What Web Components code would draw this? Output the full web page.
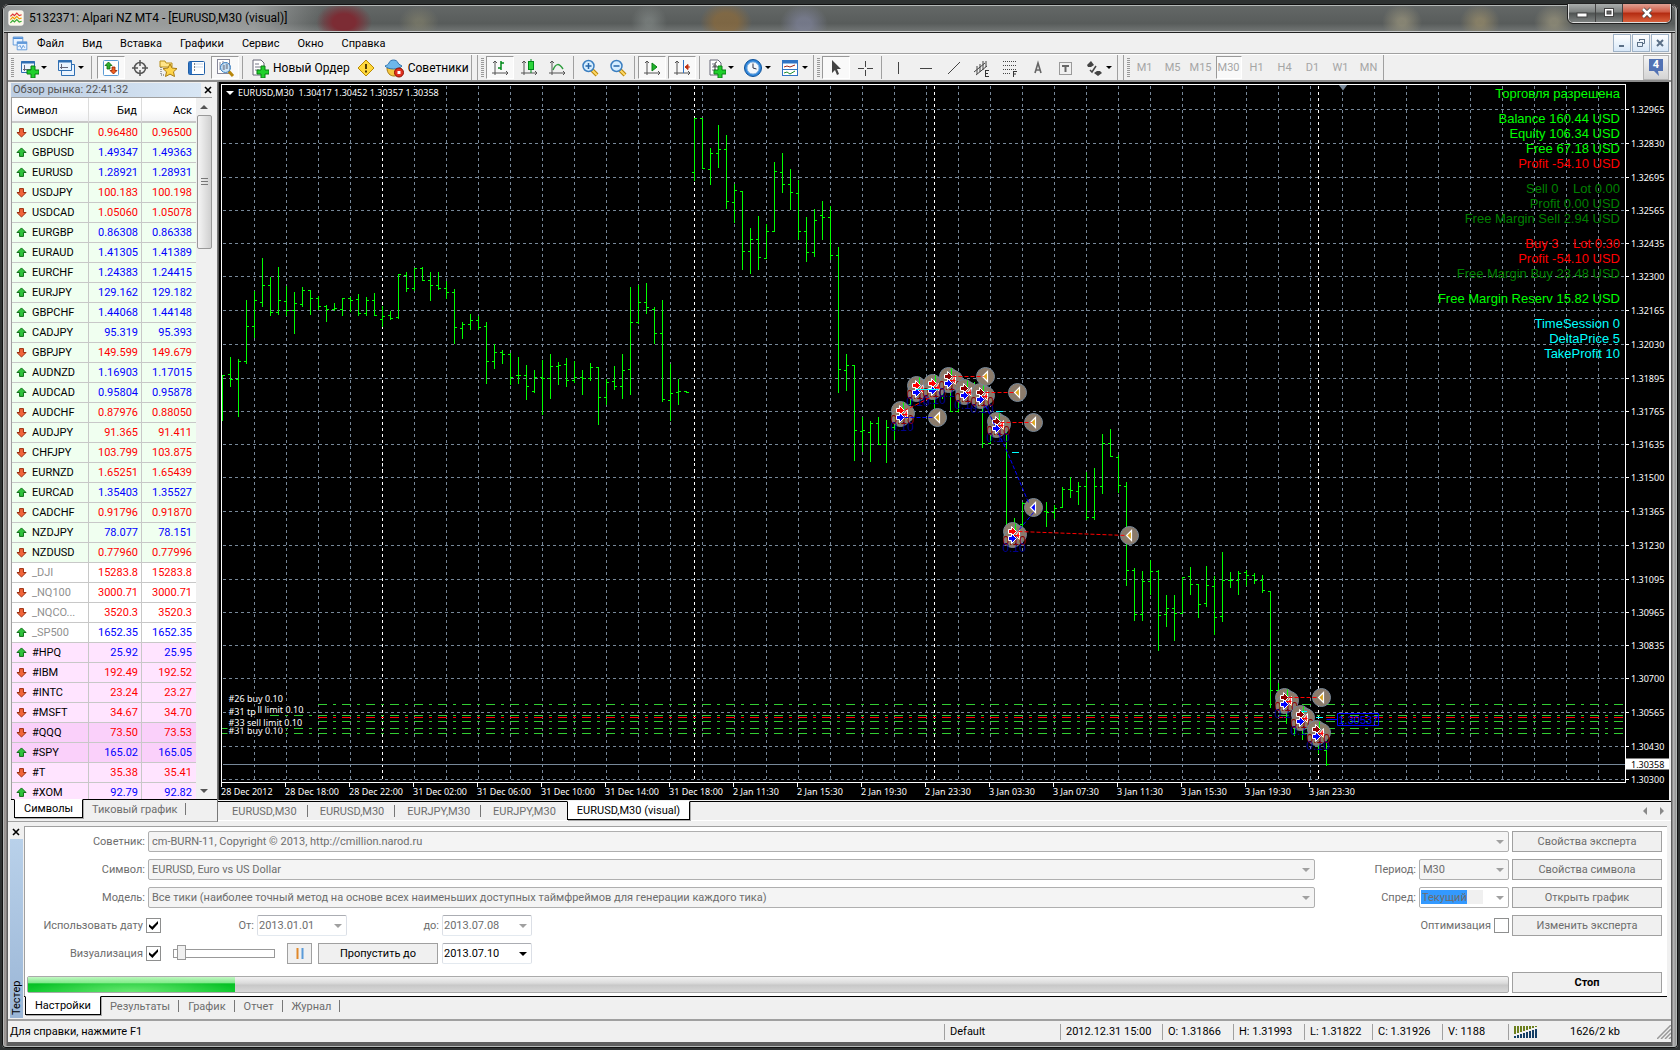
<!DOCTYPE html>
<html lang="ru">
<head>
<meta charset="utf-8">
<title>5132371: Alpari NZ MT4 - [EURUSD,M30 (visual)]</title>
<style>
:root {
  --face: #f0f0f0;
  --line: #a0a0a0;
  --muted: #6d6d6d;
  --ui: Roboto, "Noto Sans", sans-serif;
  --chart: "Noto Sans", "Open Sans", sans-serif;
}
* {
  box-sizing: border-box;
}
html,
body {
  margin: 0;
  height: 100%;
}
body {
  font: 11px/14px var(--ui);
  color: #000;
  background: #2e3232;
  overflow: hidden;
}
</style>
</head>
<body>
<app-window>
  <title-bar slot="title">5132371: Alpari NZ MT4 - [EURUSD,M30 (visual)]</title-bar>
  <menu-bar slot="bars"></menu-bar>
  <tool-bar slot="bars"></tool-bar>
  <market-watch slot="side"></market-watch>
  <trade-chart slot="main"></trade-chart>
  <dock-tabs slot="main" class="charts" active="4" items="EURUSD,M30|EURUSD,M30|EURJPY,M30|EURJPY,M30|EURUSD,M30 (visual)">
    <svg width="5" height="9"><path d="M4 0v8L0 4z" fill="#888"/></svg>
    <svg width="5" height="9"><path d="M0 0v8l4-4z" fill="#888"/></svg>
  </dock-tabs>
  <tester-panel slot="bottom"></tester-panel>
  <status-bar slot="bottom"></status-bar>
</app-window>

<script>
// Icons, all on a 20x20 box
const PLUS = '<path d="M12 8h4v4h4v4h-4v4h-4v-4H8v-4h4z" fill="#1fd02b" stroke="#0a7d14"/>'
const AXES = '<path d="M5 3v14M2 15h16M3 5l2-2 2 2M16 13l2 2-2 2" fill="none" stroke="#555"/>'
const SHEET = '<path d="M4 2h8l3 3v12H4z" fill="#fff" stroke="#667"/><path d="M6 6h4M6 9h6M6 12h4" stroke="#778"/>'
const LENS = '<path d="M12 12l5 5" stroke="#b8860b" stroke-width="4"/><path d="M12 12l5 5" stroke="#ffd966" stroke-width="2"/><circle cx="8.500" cy="8" r="5.500" fill="#d6eeff" stroke="#3c7fc0" stroke-width="1.500"/>'
const ICONS = {
  app: '<rect x="1" y="1" width="18" height="18" rx="2" fill="#fbf6e6" stroke="#fff"/><path d="M3 8l3-3 2 2 3-3 3 3 3-1" fill="none" stroke="#d33" stroke-width="1.500"/><path d="M3 12l3-3 2 2 3-3 3 3 3-1" fill="none" stroke="#e90" stroke-width="1.500"/><path d="M3 16l3-3 2 2 3-3 3 3 3-1" fill="none" stroke="#3a3" stroke-width="1.500"/>',
  doc: '<path d="M1.500 2.500h12v10h-12z" fill="#e9f3ff" stroke="#4a8ad4"/><path d="M1.500 4h12" stroke="#4a8ad4" stroke-width="2"/><path d="M6.500 8.500h12v10h-12z" fill="#e9f3ff" stroke="#4a8ad4"/><path d="M6.500 10h12" stroke="#4a8ad4" stroke-width="2"/><path d="M8 15l2-2 2 4 2-4 2 3" fill="none" stroke="#4a8ad4"/>',
  newChart: '<path d="M2.500 3.500h13v11h-13z" fill="#eaf4ff" stroke="#2f6fb3"/><path d="M2 4.500h14" stroke="#2f6fb3" stroke-width="2"/><path d="M5.500 7v6M4 11.500h8" stroke="#667"/>' + PLUS,
  windows: '<path d="M5.500 6.500h13v11h-13z" fill="#eaf4ff" stroke="#2f6fb3"/><path d="M2.500 2.500h13v10h-13z" fill="#eaf4ff" stroke="#2f6fb3"/><path d="M2 3.500h14" stroke="#2f6fb3" stroke-width="2"/><path d="M5.500 6v5M4 9.500h8" stroke="#667"/>',
  watch: '<rect x="2.500" y="2.500" width="15" height="15" rx="1" fill="#fff" stroke="#5b9bd5"/><path d="M7.500 4l3.500 3.500H9V11H6V7.500H4z" fill="#2eae2e" stroke="#0b6b0b" stroke-width=".8"/><path d="M12.500 16l3.500-3.500h-2V9h-3v3.500H9z" fill="#f06020" stroke="#902000" stroke-width=".8"/>',
  aim: '<circle cx="10" cy="10" r="5.500" fill="none" stroke="#555" stroke-width="1.500"/><path d="M10 2v6M10 12v6M2 10h6M12 10h6" stroke="#555" stroke-width="1.500"/>',
  star: '<path d="M2 3h5l1 2h6v4H2z" fill="#ffe58a" stroke="#b8901c"/><path d="M3 9v8M3 17h4" stroke="#555" stroke-dasharray="1 1"/><path d="M12 6l2 4 5 .6-3.500 3.200 1 4.700-4.500-2.400-4.500 2.400 1-4.700L5 10.600l5-.6z" fill="#ffd54a" stroke="#a87a10"/>',
  list: '<rect x="2.500" y="3.500" width="16" height="13" rx="1" fill="#fff" stroke="#1f5fa8"/><path d="M3 4h3v12H3z" fill="#2f74c4"/><path d="M8 6h9M8 9h9" stroke="#c9d6e6"/><path d="M8 6h1M8 9h1M8 12h1" stroke="#222"/>',
  find: '<rect x="2.500" y="1.500" width="12" height="14" fill="#fff" stroke="#889"/><path d="M5 4v8M8 3v9M11 4v7" stroke="#889"/><path d="M13.500 13l4.500 5" stroke="#b8860b" stroke-width="3"/><circle cx="10.500" cy="9.500" r="5" fill="#a8d4f4" fill-opacity=".6" stroke="#3c7fc0"/><path d="M9 7v5M12 6v5" stroke="#667"/>',
  order: SHEET + PLUS,
  warn: '<path d="M10 2l8 8-8 8-8-8z" fill="#ffd83c" stroke="#b98a00"/><path d="M10 6v5M10 12.500v2" stroke="#553c00" stroke-width="2"/>',
  expert: '<path d="M3 10c0 5 3 8 7 8s7-3 7-8z" fill="#f5c842" stroke="#a87a10"/><path d="M1 8c2-1 3-1 4-3 1-4 8-4 9 0 1 2 3 2 4 3-3 4-14 4-17 0z" fill="#6db7ea" stroke="#2f74b0"/><circle cx="15" cy="14.500" r="4.500" fill="#e03020" stroke="#901000"/><path d="M13.500 13h3v3h-3z" fill="#fff"/>',
  bars: AXES + '<path d="M11 3v9M8 10h3M11 5h3" stroke="#008a1a" stroke-width="1.500"/>',
  candle: AXES + '<path d="M12 1v14" stroke="#008a1a"/><rect x="9.500" y="3.500" width="5" height="8" fill="#2bd43a" stroke="#008a1a"/>',
  curve: AXES + '<path d="M6 12c3-7 6-7 10-1" fill="none" stroke="#2c9c3c" stroke-width="1.500"/>',
  zoomIn: LENS + '<path d="M5.500 8h6M8.500 5v6" stroke="#2565a8" stroke-width="1.500"/>',
  zoomOut: LENS + '<path d="M5.500 8h6" stroke="#2565a8" stroke-width="1.500"/>',
  scroll: AXES + '<path d="M10 5l5 4-5 4z" fill="#1fb52b" stroke="#0a7d14"/>',
  shift: AXES + '<path d="M11.500 2v13" stroke="#2f74c4"/><path d="M13 9l3-2.500v5zM15 9h3" fill="#c03010" stroke="#c03010"/>',
  indicators: SHEET + '<path d="M11 4c-2 0-2 1-2 3v6M7 8h4" fill="none" stroke="#444"/>' + PLUS,
  clock: '<circle cx="10" cy="10" r="8.500" fill="#2f86dc" stroke="#0f5298"/><circle cx="10" cy="10" r="6" fill="#f4f8fc" stroke="#8ab6e0"/><path d="M10 5.500V10l3.500 1" fill="none" stroke="#334"/>',
  template: '<rect x="2.500" y="2.500" width="15" height="15" fill="#fff" stroke="#2f74c4"/><path d="M2 4h16" stroke="#2f74c4" stroke-width="3"/><path d="M2 11.500h16" stroke="#2f74c4"/><path d="M4 9l3-1 3 1 5-2" fill="none" stroke="#a02818"/><path d="M4 15l3-1 3 2 5-3" fill="none" stroke="#1c8c2c"/>',
  pointer: '<path d="M6 2v13l3-3 2 5 2-1-2-5h4z" fill="#444"/>',
  cross: '<path d="M10.500 3v6M10.500 12v6M3 10.500h6M12 10.500h6" stroke="#444"/>',
  vline: '<path d="M10.500 4v12" stroke="#444"/>',
  hline: '<path d="M4 10.500h12" stroke="#444"/>',
  trend: '<path d="M4 16L16 4" stroke="#444"/>',
  channel: '<path d="M2 14l11-9M4 17l11-9M5 8v8M8 6v8M11 3v9M14 3v6" stroke="#444"/><path d="M13 12.500h4M13 15.500h3M13 18.500h4M13.500 12v7" stroke="#333"/>',
  fibo: '<path d="M3 3.500h14M3 7.500h14M3 11.500h14M3 15.500h7" stroke="#444" stroke-dasharray="1 1"/><path d="M13 13.500h4M13 16h3M13.500 13v6" stroke="#333"/>',
  letter: '<path d="M7 15l3-10 3 10M8 12h4" fill="none" stroke="#666" stroke-width="1.600"/>',
  label: '<rect x="3.500" y="4.500" width="12" height="12" fill="none" stroke="#444" stroke-dasharray="1 1"/><path d="M6 8h7M9.500 8v6" stroke="#666" stroke-width="2"/>',
  marks: '<path d="M3 7l4-4 3 4-3 2H4zM10 15l3-2h3l2 2-4 3z" fill="#444"/><path d="M6 12l2 2 4-6" fill="none" stroke="#444" stroke-width="1.500"/>',
  up: '<path d="M10 3l7 7h-4v6H7v-6H3z" fill="#2fc23c" stroke="#0b6b14" stroke-width="1.500"/>',
  down: '<path d="M10 17l7-7h-4V4H7v6H3z" fill="#f0643a" stroke="#962a0c" stroke-width="1.500"/>',
  chat: '<path d="M3 1h14v12h-5l1 5-5-5H3z" fill="#5272b4"/>'
}

const icon = (name, size = 20) => `<svg class="icon" width="${size}" height="${size}" viewBox="0 0 20 20" aria-hidden="true">${ICONS[name]}</svg>`

const RESET = `<style>
* { box-sizing: border-box; }
button, input, select { font: inherit; color: inherit; margin: 0; padding: 0; border: 0; border-radius: 0; background: none; }
svg { display: block; flex: none; }
</style>`

// Small base class: every element renders a template once
class Base extends HTMLElement {
  constructor() {
    super()
    this.attachShadow({ mode: 'open' })
  }
  connectedCallback() {
    const template = document.createElement('template')
    template.innerHTML = RESET + this.render()
    this.shadowRoot.replaceChildren(template.content.cloneNode(true))
  }
}

class AppWindow extends Base {
  render() {
    return `<style>
:host { display: block; height: 100vh; padding: 4px 2px 2px; }
.window {
  height: 100%;
  display: flex;
  flex-direction: column;
  padding: 0 7px 6px 6px;
  border-radius: 6px 6px 4px 4px;
  background: linear-gradient(90deg, #8d8886 0, #a19b99 4px, #5f5f5f 5px, #5f5f5f calc(100% - 6px), #b9b9b9 calc(100% - 5px), #777 100%);
  box-shadow: inset 0 0 0 1px #111, inset 0 0 0 2px #b5b9b8;
}
.client { flex: 1; min-height: 0; display: flex; flex-direction: column; background: var(--face); }
.work { flex: 1; min-height: 0; display: flex; }
.side { width: 210px; flex: none; display: flex; }
.main { flex: 1; min-width: 0; display: flex; flex-direction: column; }
</style>
<div class="window">
  <slot name="title"></slot>
  <div class="client">
    <slot name="bars"></slot>
    <div class="work">
      <div class="side"><slot name="side"></slot></div>
      <div class="main"><slot name="main"></slot></div>
    </div>
    <slot name="bottom"></slot>
  </div>
</div>`
  }
}

class TitleBar extends Base {
  render() {
    return `<style>
:host {
  display: flex;
  height: 29px;
  align-items: center;
  margin: 0 -4px;
  padding: 0 4px;
  font-size: 12px;
  border-bottom: 1px solid #222;
  box-shadow: inset 0 1px #111, inset 0 2px #b5b9b8, inset 0 -1px #c8caca;
  border-radius: 5px 5px 0 0;
  background:
    linear-gradient(90deg, #a0a4a4c0, #b2b5b5c0 40px, #a9acacc0 250px, transparent 320px),
    radial-gradient(ellipse 28px 20px at 340px 18px, #7c2c34 40%, transparent),
    radial-gradient(ellipse 20px 16px at 415px 18px, #8d8a7080 20%, transparent),
    radial-gradient(ellipse 18px 18px at 645px 18px, #8d949280 20%, transparent),
    radial-gradient(ellipse 26px 20px at 722px 18px, #8a6a3cc0 45%, transparent),
    radial-gradient(ellipse 24px 20px at 800px 20px, #80849cb0 30%, transparent),
    radial-gradient(ellipse 20px 18px at 1398px 18px, #a09a80a0 20%, transparent),
    radial-gradient(ellipse 20px 18px at 1476px 18px, #a0926ca0 20%, transparent),
    radial-gradient(ellipse 20px 18px at 1550px 18px, #a09a80a0 20%, transparent),
    linear-gradient(#656968, #585c5b 70%, #747877);
}
.text { flex: 1; padding-left: 5px; }
.controls { display: flex; align-self: flex-start; height: 19px; border: 1px solid #ddd; border-top: 0; border-radius: 0 0 5px 5px; overflow: hidden; outline: 1px solid #222; }
button { display: grid; place-items: center; width: 27px; border-right: 1px solid #444; background: linear-gradient(#a9adac, #7c807f 45%, #4e5251 50%, #7d8180); }
.close { width: 47px; border: 0; background: linear-gradient(#e0a093, #cf5a43 45%, #b32a10 50%, #d9603c); }
</style>
${icon('app', 16)}
<span class="text"><slot></slot></span>
<div class="controls">
  <button aria-label="Свернуть"><svg width="14" height="12"><rect x="2" y="6" width="10" height="4" fill="#fff" stroke="#444"/></svg></button>
  <button aria-label="Развернуть"><svg width="14" height="12"><rect x="2.500" y="1.500" width="9" height="8" fill="#fff" stroke="#444"/><rect x="5" y="4" width="4" height="3" fill="#666" stroke="#444"/></svg></button>
  <button class="close" aria-label="Закрыть"><svg width="14" height="12"><path d="M3 2l8 8M11 2l-8 8" stroke="#444" stroke-width="4"/><path d="M3 2l8 8M11 2l-8 8" stroke="#fff" stroke-width="2.500"/></svg></button>
</div>`
  }
}

class MenuBar extends Base {
  render() {
    const items = ['Файл', 'Вид', 'Вставка', 'Графики', 'Сервис', 'Окно', 'Справка']
    return `<style>
:host { display: flex; flex: none; align-items: center; height: 21px; padding: 0 2px 0 4px; border-bottom: 1px solid var(--line); font-size: 11px; }
nav { flex: 1; display: flex; gap: 18px; padding: 2px 0 0 9px; }
.mdi { display: flex; gap: 1px; }
.mdi button { width: 18px; height: 18px; border: 1px solid #9fb2c6; background: linear-gradient(#fff, #d8e8f8); display: grid; place-items: center; }
</style>
${icon('doc', 16)}
<nav>${items.map(t => `<button>${t}</button>`).join('')}</nav>
<div class="mdi">
  <button aria-label="Свернуть"><svg width="10" height="10"><path d="M2 8h5" stroke="#5a6f86" stroke-width="2"/></svg></button>
  <button aria-label="Восстановить"><svg width="10" height="10"><path d="M3.500 3V1.500h5v4H7M3 1.500h6" fill="none" stroke="#5a6f86"/><path d="M1.500 4.500h5v4h-5zM1 4.500h6" fill="none" stroke="#5a6f86"/></svg></button>
  <button aria-label="Закрыть"><svg width="10" height="10"><path d="M2 2l6 6M8 2l-6 6" stroke="#5a6f86" stroke-width="2"/></svg></button>
</div>`
  }
}

class ToolBar extends Base {
  btn(name, cls = '', text = '') {
    return `<button class="${cls}" aria-label="${text || name}">${icon(name)}${text}</button>`
  }
  render() {
    const b = (n, c, t) => this.btn(n, c, t)
    const frames = ['M1', 'M5', 'M15', 'M30', 'H1', 'H4', 'D1', 'W1', 'MN']
    return `<style>
:host { display: flex; flex: none; height: 28px; border-top: 1px solid #fff; border-bottom: 2px solid #8c8c8c; padding-right: 2px; }
.group { display: flex; align-items: center; gap: 2px; padding: 1px 1px 1px 8px; border-right: 1px solid var(--line); position: relative; margin-right: 5px; }
.group + .group { border-left: 1px solid var(--line); }
.group.joined { border-right: 0; margin-right: 0; }
.group::before { content: ""; position: absolute; left: 3px; top: 3px; bottom: 3px; width: 3px; background: repeating-linear-gradient(#999 0 1px, transparent 1px 2px); }
button { height: 23px; min-width: 26px; padding: 0 3px; display: flex; align-items: center; justify-content: center; font-size: 11px; }
.on { border: 1px solid; border-color: #999 #fff #fff #999; background: #f9f9f9; }
.drop { width: 35px; gap: 2px; justify-content: flex-start; }
.drop::after { content: ""; border: 3px solid transparent; border-top-color: #000; border-bottom: 0; }
.text { gap: 4px; padding-right: 1px; font-size: 12px; }
i { width: 1px; align-self: stretch; margin: 0 1px; background: var(--line); }
.drop + i { margin-right: 3px; }
.tf { padding: 0; color: #a5a5a5; }
.space { flex: 1; }
.chat { border: 1px solid #b4b4b4; background: linear-gradient(#f4f4f4, #d4d4d4); display: grid; width: 26px; height: 25px; padding: 0; place-items: center; }
.chat > * { grid-area: 1 / 1; }
.chat b { color: #fff; font-size: 11px; line-height: 14px; padding-bottom: 5px; }
</style>
<div class="group">
  ${b('newChart', 'drop')}${b('windows', 'drop')}<i></i>
  ${b('watch', 'on')}${b('aim')}${b('star')}${b('list')}${b('find', 'on')}<i></i>
  ${b('order', 'text', 'Новый Ордер')}${b('warn')}${b('expert', 'text', 'Советники')}
</div>
<div class="group joined">
  ${b('bars', 'on')}${b('candle')}${b('curve')}<i></i>
  ${b('zoomIn')}${b('zoomOut')}<i></i>
  ${b('scroll', 'on')}${b('shift', 'on')}<i></i>
  ${b('indicators', 'drop')}${b('clock', 'drop')}${b('template', 'drop')}
</div>
<div class="group">
  ${b('pointer', 'on')}${b('cross')}<i></i>
  ${b('vline')}${b('hline')}${b('trend')}${b('channel')}${b('fibo')}${b('letter')}${b('label')}${b('marks', 'drop')}
</div>
<div class="group">
  ${frames.map(t => `<button class="tf ${t === 'M30' ? 'on' : ''}">${t}</button>`).join('')}
</div>
<span class="space"></span>
<button class="chat">${icon('chat', 20)}<b>4</b></button>`
  }
}

const QUOTES = `USDCHF 0.96480 0.96500 d
GBPUSD 1.49347 1.49363 u
EURUSD 1.28921 1.28931 u
USDJPY 100.183 100.198 d
USDCAD 1.05060 1.05078 d
EURGBP 0.86308 0.86338 u
EURAUD 1.41305 1.41389 u
EURCHF 1.24383 1.24415 u
EURJPY 129.162 129.182 u
GBPCHF 1.44068 1.44148 u
CADJPY 95.319 95.393 u
GBPJPY 149.599 149.679 d
AUDNZD 1.16903 1.17015 u
AUDCAD 0.95804 0.95878 u
AUDCHF 0.87976 0.88050 d
AUDJPY 91.365 91.411 d
CHFJPY 103.799 103.875 d
EURNZD 1.65251 1.65439 d
EURCAD 1.35403 1.35527 u
CADCHF 0.91796 0.91870 d
NZDJPY 78.077 78.151 u
NZDUSD 0.77960 0.77996 d
_DJI 15283.8 15283.8 d
_NQ100 3000.71 3000.71 d
_NQCO... 3520.3 3520.3 d
_SP500 1652.35 1652.35 u
#HPQ 25.92 25.95 u
#IBM 192.49 192.52 d
#INTC 23.24 23.27 d
#MSFT 34.67 34.70 d
#QQQ 73.50 73.53 d
#SPY 165.02 165.05 u
#T 35.38 35.41 d
#XOM 92.79 92.82 u`

class MarketWatch extends Base {
  render() {
    const rows = QUOTES.split('\n').map(line => {
      const [name, bid, ask, dir] = line.split(' ')
      let kind = 'fx'
      if (name[0] === '_') kind = 'index'
      if (name[0] === '#') kind = 'stock'
      if (name === '#QQQ' || name === '#SPY') kind = 'fund'
      return `<tr class="${kind} ${dir}"><td>${icon(dir === 'u' ? 'up' : 'down', 13)}${name}</td><td>${bid}</td><td>${ask}</td></tr>`
    }).join('')
    return `<style>
:host { display: flex; flex: 1; flex-direction: column; min-height: 0; min-width: 0; padding: 0 0 2px 3px; border-right: 1px solid #777; border-bottom: 1px solid var(--line); font-size: 11px; }
header { display: flex; flex: none; height: 15px; align-items: center; color: #555; padding-right: 2px; }
header span { flex: 1; padding-left: 2px; background: linear-gradient(90deg, #bccde2, #d8e6f4); }
header button { width: 14px; height: 14px; display: grid; place-items: center; }
.list { flex: 1; min-height: 0; display: flex; margin-right: 5px; border: 1px solid var(--line); border-right: 0; border-bottom: 0; background: #fff; }
.rows { flex: 1; overflow: hidden; }
table { width: 100%; border-collapse: separate; border-spacing: 0; table-layout: fixed; }
th { height: 25px; font-weight: normal; text-align: right; padding: 2px 4px 0 5px; border-right: 1px solid #dcdcdc; border-bottom: 2px solid #c8c8c8; background: linear-gradient(#fff 50%, #f2f3f5); }
th:first-child { width: 77px; text-align: left; }
th:nth-child(2) { width: 53px; }
th:last-child, td:last-child { border-right: 0; }
td { height: 20px; padding: 0 3px 0 0; text-align: right; border-right: 1px solid #c8c8c8; border-bottom: 1px solid #c8c8c8; }
td:last-child { padding-right: 4px; }
td:first-child { display: flex; gap: 4px; align-items: center; padding-left: 3px; color: #000; }
.fx { background: #f0fff0; }
.stock { background: #ffe4ff; }
.fund { background: #fad0fa; }
.u { color: #00f; }
.d { color: #f00; }
.index td:first-child { color: #909090; }
.bar { width: 16px; display: flex; flex-direction: column; align-items: center; background: #f0f0f0; }
.bar button { width: 15px; height: 17px; display: grid; place-items: center; }
.bar .thumb { height: 134px; border: 1px solid #999; border-radius: 2px; background: linear-gradient(90deg, #f5f5f5, #e2e2e2 50%, #cfcfcf); }
.bar span { flex: 1; }
.arrow { border: 4px solid transparent; border-bottom-color: #555; border-top: 0; }
.arrow.dn { border: 4px solid transparent; border-top-color: #555; border-bottom: 0; }
</style>
<header><span>Обзор рынка: 22:41:32</span><button aria-label="Закрыть"><svg width="8" height="8"><path d="M1 1l6 6M7 1l-6 6" stroke="#000" stroke-width="1.600"/></svg></button></header>
<div class="list">
  <div class="rows">
    <table>
      <thead><tr><th>Символ</th><th>Бид</th><th>Аск</th></tr></thead>
      <tbody>${rows}</tbody>
    </table>
  </div>
  <div class="bar">
    <button aria-label="Вверх"><i class="arrow"></i></button>
    <button class="thumb" aria-label="Прокрутка"><svg width="7" height="8"><path d="M0 .5h7M0 3.500h7M0 6.500h7" stroke="#777"/></svg></button>
    <span></span>
    <button aria-label="Вниз"><i class="arrow dn"></i></button>
  </div>
</div>
<dock-tabs items="Символы|Тиковый график" active="0"></dock-tabs>`
  }
}

class DockTabs extends Base {
  render() {
    const active = Number(this.getAttribute('active'))
    const items = this.getAttribute('items').split('|')
    const tabs = items.map((t, i) => `<button role="tab" class="${i === active ? 'on' : ''} ${i + 1 === active ? 'before' : ''}">${t}</button>`).join('')
    return `<style>
:host { display: flex; flex: none; height: 20px; align-items: flex-start; padding-left: 3px; border-top: 1px solid #000; font-size: 11px; color: var(--muted); }
:host(.charts) { margin-top: 1px; border-bottom: 1px solid #fff; height: 20px; margin-bottom: 1px; padding-left: 2px; }
:host(.charts) button { padding: 1px 11px 0 12px; }
.tabs { display: flex; flex: 1; }
button { height: 18px; padding: 1px 9px 0; position: relative; white-space: nowrap; }
button:not(.on):not(.before)::after { content: ""; position: absolute; right: 0; top: 3px; bottom: 3px; width: 1px; background: #777; }
.on { margin-top: -1px; height: 19px; background: #fff; color: #000; border: 1px solid #000; border-top-color: #fff; box-shadow: 1px 1px #aaa; }
:host(.charts) .on { padding: 1px 9px 0; }
::slotted(svg) { margin: 5px 6px 0; }
</style>
<div class="tabs" role="tablist">${tabs}</div><slot></slot>`
  }
}

// high, low, open, close of each bar on the pixel scale of the plot; one bar every 8px
const BARS = [
  [375,420,375,375],[357,386,374,379],[359,416,379,361],[300,363,361,326],[291,337,326,300],[258,306,302,285],
  [277,315,285,312],[267,314,312,300],[286,315,301,310],[292,333,310,303],[287,306,304,290],[290,314,290,298],
  [296,309,298,306],[305,321,306,309],[303,310,309,308],[298,315,309,298],[297,311,298,300],[294,315,299,313],
  [297,315,313,300],[293,315,300,315],[306,326,319,316],[311,319,315,318],[274,318,317,274],[272,291,275,288],
  [268,290,288,268],[267,280,268,280],[272,300,280,285],[272,289,285,288],[281,298,288,292],[289,343,292,327],
  [322,338,328,324],[314,329,324,320],[316,329,320,327],[322,383,326,361],[344,368,361,352],[350,363,352,354],
  [353,384,354,377],[357,383,375,375],[365,399,375,386],[370,392,391,377],[360,414,377,378],[354,398,378,366],
  [362,384,366,365],[358,386,364,380],[361,382,380,377],[370,394,377,378],[363,380,378,367],[367,424,367,397],
  [379,404,397,382],[366,389,381,386],[354,398,386,370],[287,394,369,322],[285,323,322,302],[283,313,302,307],
  [307,343,309,333],[300,401,333,399],[364,420,400,393],[379,404,392,391],[391,392,391,392],[118,180,172,118],
  [118,168,118,168],[148,184,169,153],[125,167,153,149],[135,208,149,201],[184,222,202,190],[191,269,191,251],
  [228,273,251,239],[216,269,239,257],[224,258,258,231],[162,231,231,171],[153,192,172,184],[169,209,184,192],
  [180,239,193,231],[217,261,231,252],[209,256,252,220],[201,239,215,217],[206,259,217,255],[247,392,255,369],
  [354,390,370,365],[365,460,365,430],[417,451,431,430],[421,461,432,423],[417,444,423,444],[420,462,444,427],
  [412,439,427,412],[402,415,412,404],[397,415,404,397],[378,395,395,380],[380,396,382,390],[382,408,390,384],
  [384,398,384,390],[392,411,390,411],[392,411,411,393],[386,400,393,388],[382,398,388,395],[396,447,398,443],
  [430,443,443,432],[418,436,432,420],[428,527,430,526],[518,532,526,524],[502,527,524,503],[500,514,503,510],
  [503,513,510,511],[502,526,511,512],[505,518,512,508],[487,507,507,489],[477,497,489,490],[482,504,491,486],
  [472,519,486,517],[468,519,517,486],[434,493,486,443],[429,456,443,456],[455,492,457,485],[482,585,486,570],
  [568,620,570,614],[571,620,614,581],[560,594,581,571],[570,650,571,615],[595,626,614,608],[595,640,608,613],
  [577,613,613,577],[567,594,576,584],[584,617,584,604],[566,606,603,585],[576,634,586,617],[552,621,616,580],
  [572,587,580,580],[571,594,580,573],[570,585,572,575],[573,583,575,580],[575,592,580,590],[591,707,591,690],
  [683,703,690,695],[698,723,700,715],[714,735,716,728],[724,739,728,733],[728,740,733,735],[735,753,735,749],
  [740,765,750,764]
]
const PRICES = [[109,32965],[143,32830],[177,32695],[210,32565],[243,32435],[276,32300],[310,32165],[344,32030],[378,31895],[411,31765],[444,31635],[477,31500],[511,31365],[545,31230],[579,31095],[612,30965],[645,30835],[678,30700],[712,30565],[746,30430],[779,30300]]
const TIMES = ['28 Dec 2012','28 Dec 18:00','28 Dec 22:00','31 Dec 02:00','31 Dec 06:00','31 Dec 10:00','31 Dec 14:00','31 Dec 18:00','2 Jan 11:30','2 Jan 15:30','2 Jan 19:30','2 Jan 23:30','3 Jan 03:30','3 Jan 07:30','3 Jan 11:30','3 Jan 15:30','3 Jan 19:30','3 Jan 23:30']
const INFO = [
  ['lime', 'Торговля разрешена'],
  ['lime', 'Balance 160.44 USD', 'Equity 106.34 USD', 'Free 67.18 USD', 'red:Profit -54.10 USD'],
  ['green', 'Sell 0    Lot 0.00', 'Profit 0.00 USD', 'Free Margin Sell 2.94 USD'],
  ['red', 'Buy 3    Lot 0.30', 'Profit -54.10 USD', 'green:Free Margin Buy 23.48 USD'],
  ['lime', 'Free Margin Reserv 15.82 USD'],
  ['aqua', 'TimeSession 0', 'DeltaPrice 5', 'TakeProfit 10']
]

class TradeChart extends Base {
  grid() {
    let out = ''
    for (let x = 254; x < 2600; x += 32) out += `<path d="M${x} 85V1400"/>`
    for (const [y] of PRICES) out += `<path d="M222 ${y}H2600"/>`
    return out
  }
  bars() {
    return BARS.map(([h, l, o, c], i) => {
      const x = 222 + i * 8
      return `M${x} ${h - .5}V${l + .5}M${x - 2.5} ${o}H${x}M${x} ${c}H${x + 2.5}`
    }).join('')
  }
  disc(x, y) {
    return `<circle cx="${x}" cy="${y}" r="9" fill="#8b7b6b" stroke="#778899"/>`
  }
  // close marker: small triangle pointing left
  exit(x, y, fill = '#daa520') {
    return this.disc(x, y) + `<path d="M${x + 2} ${y - 5}v10l-5-5z" fill="${fill}" stroke="#fff" stroke-width="1.200"/>`
  }
  // open marker: arrow pointing right
  entry(x, y, fill) {
    return `<path d="M${x - 4} ${y - 2}h3v-3l5 5-5 5v-3h-3z" fill="${fill}" stroke="#fff"/>`
  }
  pair(x, y, top) {
    return this.disc(x, y) + this.disc(x + 5, y + 3) + this.disc(x, y + 7) +
      `<path d="M${x + 7} ${y - 1}v9l-4-4z" fill="#f33" stroke="#fff"/><path d="M${x + 1} ${y + 4}h6" stroke="#f00"/><path d="M${x + 3} ${y - 8}v8" stroke="#0f0"/>` +
      `<text x="${x - 10}" y="${y + 20}" fill="#00008b">0.10</text><text x="${x - 10}" y="${y + 13}" fill="#8b0000">0.10</text>` +
      this.entry(x, y, top) + this.entry(x, y + 7, '#00f')
  }
  orders() {
    const line = (y, x, c) => `<path d="M${x} ${y}H2600" stroke="${c}"/>`
    return `<g stroke-dasharray="9 6 3 6">${line(704, 317, '#32cd32')}${line(715, 269, '#32cd32')}${line(717, 317, '#f00')}${line(721, 317, '#32cd32')}${line(728, 221, '#32cd32')}${line(733, 221, '#32cd32')}</g>`
  }
  tag(x, y, text, w) {
    return `<rect x="${x - 1}" y="${y - 8}" width="${w}" height="10" fill="#000"/><text x="${x}" y="${y}">${text}</text>`
  }
  render() {
    const info = INFO.map(([color, ...lines]) => `<p>${lines.map(t => {
      const [c, s] = t.includes(':') ? t.split(':') : [color, t]
      return `<span style="color:${c}">${s}</span>`
    }).join('')}</p>`).join('')
    return `<style>
:host { display: grid; flex: 1; min-height: 0; grid-template: minmax(0, 1fr) 17px / minmax(0, 1fr) 43px; background: #000; color: #fff; padding: 2px 0 0 2px; margin: 0 2px 0 0; border-left: 1px solid #555; font: 9px/12px var(--chart); }
.plot { position: relative; border: 1px solid #fff; overflow: hidden; }
svg { width: 100%; height: 100%; overflow: hidden; }
.axis { overflow: visible; }
.crisp { shape-rendering: crispEdges; }
.info { position: absolute; top: 1px; right: 5px; text-align: right; font: 13px/15px "Liberation Sans", sans-serif; white-space: pre; }
.info p { margin: 0 0 10px; }
.info span { display: block; }
.caption { position: absolute; top: 2px; left: 4px; white-space: pre; display: flex; align-items: center; gap: 4px; background: #000; }
.caption i { border: 4px solid transparent; border-top-color: #fff; border-bottom: 0; }
.times { display: flex; overflow: hidden; }
.times span { width: 64px; flex: none; white-space: nowrap; padding-top: 3px; background: linear-gradient(#fff, #fff) 0 0 / 1px 4px no-repeat; }
</style>
<div class="plot">
  <svg>
    <g transform="translate(-221.500 -84.500)" fill="none">
      <g class="crisp" stroke="#778899" stroke-dasharray="3 3">${this.grid()}</g>
      <path class="crisp" stroke="#fff" stroke-dasharray="3 3" d="M382 85V1400M694 85V1400M934 85V1400M1318 85V1400"/>
      <path class="crisp" stroke="#778899" d="M222 764H2600"/>
      <g class="crisp">${this.orders()}</g>
      <path class="crisp" stroke="#00ff00" d="${this.bars()}"/>
      <path fill="#778899" d="M1338 84h9l-4.500 6z"/>
      <g font-family="Liberation Sans" font-size="12">
        ${this.exit(937, 417)}
        ${this.pair(900, 410, '#f00')}
        ${this.pair(916, 385, '#f00')}
        ${this.pair(932, 383, '#f00')}
        ${this.pair(948, 376, '#8b0000')}
        ${this.pair(964, 388, '#8b0000')}
        ${this.pair(980, 392, '#8b0000')}
        ${this.pair(996, 421, '#8b0000')}
        ${this.pair(1012, 531, '#f00')}
        ${this.pair(1284, 697, '#8b0000')}
        ${this.pair(1300, 714, '#8b0000')}
        ${this.pair(1316, 729, '#8b0000')}
        ${this.exit(985, 376)}${this.exit(1017, 392)}${this.exit(1033, 422)}${this.exit(1033, 507, '#00f')}${this.exit(1129, 535)}${this.exit(1321, 697)}
      </g>
      <g stroke="#f00" stroke-dasharray="4 2"><path d="M952 376H983M985 392H1014M1000 422H1031M1018 531L1126 535M1288 697H1318M904 410L932 396"/></g>
      <g stroke="#00f" stroke-dasharray="4 2"><path d="M904 417H934M985 405L1007 452L1028 502M1033 512L1018 530"/></g>
      <path class="crisp" stroke="#0ff" d="M915 389H938M995 411H1002M1011 452H1018M1300 711H1306M1315 717H1322"/>
      <path stroke="#00f" d="M1326 719H1337M1337 713H1378V725H1337Z"/>
      <text x="1338" y="723" fill="#00f" font-family="Liberation Sans" font-size="11">1.30537</text>
      <g fill="#fff">
        ${this.tag(228, 733, '#31 buy 0.10', 58)}
        ${this.tag(228, 701, '#26 buy 0.10', 58)}
        ${this.tag(257, 712, 'll limit 0.10', 46)}
        ${this.tag(228, 714, '#31 tp', 28)}
        ${this.tag(228, 725, '#33 sell limit 0.10', 76)}
      </g>
    </g>
  </svg>
  <div class="caption"><i></i><span>EURUSD,M30  1.30417 1.30452 1.30357 1.30358</span></div>
  <div class="info">${info}</div>
</div>
<svg class="axis" fill="#fff">
  <g transform="translate(0 -83.500)">
    ${PRICES.map(([y, p]) => `<path class="crisp" d="M0 ${y}H3" stroke="#fff"/><text x="5" y="${y + 3}">1.${p}</text>`).join('')}
    <rect x="0" y="758" width="43" height="11"/><text x="5" y="767" fill="#000">1.30358</text>
  </g>
</svg>
<div class="times">${TIMES.map(t => `<span>${t}</span>`).join('')}</div>`
  }
}

class TesterPanel extends Base {
  pick(id, text, cls = '') {
    return `<span class="pick ${cls}"><select id="${id}" ${cls.includes('live') ? '' : 'disabled'}><option>${text}</option></select></span>`
  }
  render() {
    return `<style>
:host { display: flex; flex: none; padding: 4px 4px 1px 0; border-bottom: 2px solid var(--line); color: var(--muted); font-size: 11px; }
.strip { width: 16px; display: flex; flex-direction: column; align-items: center; }
.strip button { height: 12px; display: grid; place-items: center; }
.strip span { flex: 1; width: 13px; margin-top: 1px; display: flex; align-items: center; line-height: 13px; padding-top: 3px; color: #000; writing-mode: vertical-rl; transform: rotate(180deg); background: linear-gradient(#9bb6d6, #b9d1ea); }
.panel { flex: 1; min-width: 0; }
form { background: #fff; border: 1px solid var(--line); border-bottom: 0; border-right: 0; padding: 4px 5px 3px 2px; display: flex; flex-direction: column; gap: 7px; }
.row { display: flex; align-items: center; height: 21px; gap: 3px; }
label { white-space: nowrap; }
.first { width: 118px; text-align: right; flex: none; }
.first.tick { width: 116px; }
.side { width: 98px; text-align: right; }
.grow { flex: 1; }
.pick { display: inline-flex; position: relative; height: 21px; }
.pick::after { content: ""; position: absolute; right: 5px; top: 9px; border: 4px solid transparent; border-top-color: #a0a0a0; border-bottom: 0; pointer-events: none; }
select { appearance: none; width: 100%; padding-left: 3px; border: 1px solid #afafaf; border-radius: 2px; background: #f4f4f4; color: var(--muted); opacity: 1; }
.short { width: 90px; flex: none; }
.date { width: 90px; }
.date select { background: #fff; border-color: #abadb3 #dbdfe6 #e3e9ef; padding-left: 1px; }
.live select { color: #000; }
.live::after { border-top-color: #000; }
.spread select { padding-left: 2px; background: linear-gradient(#39f, #39f) 1px 2px / 46px 14px no-repeat, linear-gradient(#f0f0f0, #f0f0f0) 1px 2px / 62px 14px no-repeat, #fff; }
.btn { height: 21px; border: 1px solid var(--line); background: var(--face); width: 150px; flex: none; color: inherit; }
.btn.go { width: 120px; color: #000; margin: 0 1px 0 3px; }
.btn.pause { width: 25px; display: grid; place-items: center; }
.btn.stop { color: #000; font-weight: bold; }
input[type=checkbox] { appearance: none; flex: none; width: 15px; height: 15px; border: 1px solid #8e8f8f; background: #fff; display: grid; place-items: center; }
input[type=checkbox]:checked::before { content: ""; width: 9px; height: 9px; background: #000; clip-path: polygon(0 35%, 35% 65%, 100% 0, 100% 30%, 38% 100%, 0 65%); }
input[type=range] { appearance: none; width: 102px; height: 16px; margin: 0 9px; }
input[type=range]::-webkit-slider-runnable-track { height: 9px; border: 1px solid #999; background: #fff; }
input[type=range]::-webkit-slider-thumb { appearance: none; width: 9px; height: 15px; margin-top: -5px; border: 1px solid #999; background: #f0f0f0; }
.from { width: 90px; text-align: right; }
.to { width: 89px; text-align: right; }
.row.tail { height: 22px; align-items: flex-end; }
.progress { flex: 1; height: 17px; border: 1px solid #aaa; border-radius: 2px; background: linear-gradient(#f2f2f2, #dcdcdc 40%, #c8c8c8 55%, #d8d8d8); }
.progress i { display: block; width: 14%; height: 100%; background: radial-gradient(ellipse 50% 120% at 50% 100%, #8ef58eb0, transparent), linear-gradient(#c4f7c4, #7ee88a 40%, #06c025 45%, #12cc30); }
dock-tabs { padding-left: 1px; margin-bottom: 2px; }
</style>
<div class="strip">
  <button aria-label="Закрыть"><svg width="8" height="8"><path d="M1 1l6 6M7 1l-6 6" stroke="#000" stroke-width="1.600"/></svg></button>
  <span>Тестер</span>
</div>
<div class="panel">
  <form>
    <div class="row">
      <label class="first" for="expert">Советник:</label>${this.pick('expert', 'cm-BURN-11, Copyright © 2013, http://cmillion.narod.ru', 'grow')}
      <button type="button" class="btn">Свойства эксперта</button>
    </div>
    <div class="row">
      <label class="first" for="symbol">Символ:</label>${this.pick('symbol', 'EURUSD, Euro vs US Dollar', 'grow')}
      <label class="side" for="period">Период:</label>${this.pick('period', 'M30', 'short')}
      <button type="button" class="btn">Свойства символа</button>
    </div>
    <div class="row">
      <label class="first" for="model">Модель:</label>${this.pick('model', 'Все тики (наиболее точный метод на основе всех наименьших доступных таймфреймов для генерации каждого тика)', 'grow')}
      <label class="side" for="spread">Спред:</label>${this.pick('spread', 'Текущий', 'short spread')}
      <button type="button" class="btn">Открыть график</button>
    </div>
    <div class="row">
      <label class="first tick" for="dates">Использовать дату</label><input type="checkbox" id="dates" checked>
      <label class="from" for="from">От:</label>${this.pick('from', '2013.01.01', 'date')}
      <label class="to" for="to">до:</label>${this.pick('to', '2013.07.08', 'date')}
      <span class="grow"></span>
      <label for="optimize">Оптимизация</label><input type="checkbox" id="optimize">
      <button type="button" class="btn">Изменить эксперта</button>
    </div>
    <div class="row">
      <label class="first tick" for="visual">Визуализация</label><input type="checkbox" id="visual" checked>
      <input type="range" aria-label="Скорость" min="0" max="32" value="1">
      <button type="button" class="btn pause" aria-label="Пауза"><svg width="10" height="11"><path d="M2.500 0v11" stroke="#e0882a" stroke-width="2"/><path d="M7.500 0v11" stroke="#5b9bd8" stroke-width="2"/></svg></button>
      <button type="button" class="btn go">Пропустить до</button>
      ${this.pick('skip', '2013.07.10', 'date live')}
    </div>
    <div class="row tail">
      <div class="progress"><i></i></div>
      <button type="button" class="btn stop">Стоп</button>
    </div>
  </form>
  <dock-tabs items="Настройки|Результаты|График|Отчет|Журнал" active="0"></dock-tabs>
</div>`
  }
}

class StatusBar extends Base {
  render() {
    const cells = [['Default', 116], ['2012.12.31 15:00', 102], ['O: 1.31866', 71], ['H: 1.31993', 71], ['L: 1.31822', 68], ['C: 1.31926', 70], ['V: 1188', 66]]
    let bars = ''
    for (let i = 0; i < 8; i++) bars += `<path d="M${i * 3 + 1} 0v${8 - i}" stroke="#6b7f1c" stroke-width="2"/><path d="M${i * 3 + 1} 12v-${i + 2}" stroke="#143f66" stroke-width="2"/>`
    return `<style>
:host { display: flex; flex: none; height: 21px; align-items: center; padding: 1px 0 0 2px; font-size: 11px; }
.help { flex: 1; }
.cell { height: 16px; border-left: 1px solid var(--line); padding-left: 5px; line-height: 16px; white-space: nowrap; }
.net { width: 163px; display: flex; align-items: center; padding-left: 5px; }
.net b { flex: 1; font-weight: normal; padding-left: 32px; }
</style>
<span class="help">Для справки, нажмите F1</span>
${cells.map(([t, w]) => `<span class="cell" style="width:${w}px">${t}</span>`).join('')}
<span class="cell net"><svg width="24" height="12">${bars}</svg><b>1626/2 kb</b><svg width="14" height="14"><path d="M0 14L14 0M4 14L14 4M8 14l6-6M12 14l2-2" stroke="#999" stroke-width="1.500"/></svg></span>`
  }
}

customElements.define('app-window', AppWindow)
customElements.define('title-bar', TitleBar)
customElements.define('menu-bar', MenuBar)
customElements.define('tool-bar', ToolBar)
customElements.define('market-watch', MarketWatch)
customElements.define('dock-tabs', DockTabs)
customElements.define('trade-chart', TradeChart)
customElements.define('tester-panel', TesterPanel)
customElements.define('status-bar', StatusBar)
</script>
</body>
</html>
